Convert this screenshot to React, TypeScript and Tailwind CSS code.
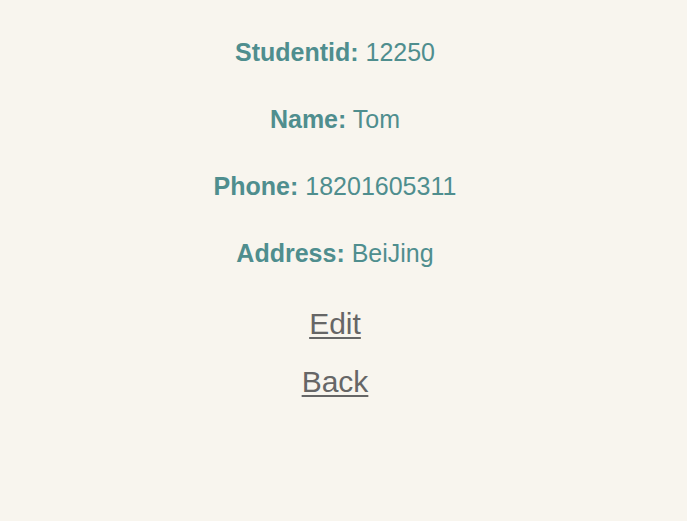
const fields = [
  { label: "Studentid", value: "12250" },
  { label: "Name", value: "Tom" },
  { label: "Phone", value: "18201605311" },
  { label: "Address", value: "BeiJing" },
];

const actions = ["Edit", "Back"];

export default function App() {
  return (
    <main className="min-h-screen bg-[#f8f5ee] pt-[38px] pr-[17px] text-center font-['Liberation_Sans',Arial,sans-serif]">
      <div className="flex flex-col gap-[38px] text-[25px] leading-[29px] text-[#4f8e8e]">
        {fields.map(({ label, value }) => (
          <p key={label}>
            <strong className="font-bold">{label}:</strong> {value}
          </p>
        ))}
      </div>
      <nav className="mt-[39px] flex flex-col items-center gap-6 text-[30px] leading-[34px] text-[#666666]">
        {actions.map((action) => (
          <a key={action} href={`#${action.toLowerCase()}`} className="underline decoration-2 underline-offset-[3px]">
            {action}
          </a>
        ))}
      </nav>
    </main>
  );
}
